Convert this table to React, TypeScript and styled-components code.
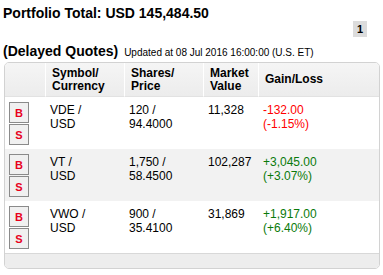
import React from 'react';
import styled, { createGlobalStyle } from 'styled-components';

const GlobalStyle = createGlobalStyle`
  body {
    margin: 0;
    background: #fff;
    font-family: 'Liberation Sans', Arial, sans-serif;
    color: #000;
  }
`;

type Holding = {
  symbol: string;
  currency: string;
  shares: string;
  price: string;
  value: string;
  gain: string;
  pct: string;
};

const holdings: Holding[] = [
  { symbol: 'VDE', currency: 'USD', shares: '120', price: '94.4000', value: '11,328', gain: '-132.00', pct: '(-1.15%)' },
  { symbol: 'VT', currency: 'USD', shares: '1,750', price: '58.4500', value: '102,287', gain: '+3,045.00', pct: '(+3.07%)' },
  { symbol: 'VWO', currency: 'USD', shares: '900', price: '35.4100', value: '31,869', gain: '+1,917.00', pct: '(+6.40%)' },
];

function App() {
  return (
    <Page>
      <GlobalStyle />
      <Title>Portfolio Total: USD 145,484.50</Title>
      <Pager>
        <PageBadge>1</PageBadge>
      </Pager>
      <QuotesLine>
        <Heading>(Delayed Quotes)</Heading>
        <Updated>Updated at 08 Jul 2016 16:00:00 (U.S. ET)</Updated>
      </QuotesLine>
      <Table>
        <HeadRow>
          <HeadCell />
          <HeadCell>
            Symbol/
            <br />
            Currency
          </HeadCell>
          <HeadCell>
            Shares/
            <br />
            Price
          </HeadCell>
          <HeadCell>
            Market
            <br />
            Value
          </HeadCell>
          <HeadCell last>Gain/Loss</HeadCell>
        </HeadRow>
        {holdings.map((h, i) => (
          <Row key={h.symbol} striped={i % 2 === 1}>
            <Actions>
              <TradeButton>B</TradeButton>
              <TradeButton>S</TradeButton>
            </Actions>
            <Cell>
              {h.symbol} /
              <br />
              {h.currency}
            </Cell>
            <Cell>
              {h.shares} /
              <br />
              {h.price}
            </Cell>
            <Cell>{h.value}</Cell>
            <Change up={h.gain.startsWith('+')}>
              {h.gain}
              <br />
              {h.pct}
            </Change>
          </Row>
        ))}
        <Footer />
      </Table>
    </Page>
  );
}

export default App;

const Page = styled.div`
  padding: 5px 5px 0 3px;
  width: 383px;
  box-sizing: border-box;
`;

const Title = styled.h2`
  margin: 0;
  font-size: 14px;
  line-height: 17px;
  font-weight: bold;
`;

const Pager = styled.div`
  display: flex;
  justify-content: flex-end;
  padding-right: 11px;
  margin-top: -1px;
`;

const PageBadge = styled.span`
  display: flex;
  align-items: center;
  justify-content: center;
  width: 14px;
  height: 16px;
  background: #dcdcdc;
  font-size: 11px;
  font-weight: bold;
`;

const QuotesLine = styled.div`
  display: flex;
  align-items: baseline;
  gap: 6px;
  margin-top: 6px;
`;

const Heading = styled.h3`
  margin: 0;
  font-size: 14px;
  line-height: 17px;
  font-weight: bold;
`;

const Updated = styled.span`
  font-size: 10px;
`;

const Table = styled.div`
  margin: 2px 0 0 1px;
  width: 374px;
  border: 1px solid #d2d2d2;
  border-radius: 5px;
  overflow: hidden;
  display: grid;
  grid-template-columns: 41px 79px 79px 55px 1fr;
`;

const HeadRow = styled.div`
  display: contents;
`;

const HeadCell = styled.div<{ last?: boolean }>`
  height: 33px;
  display: flex;
  align-items: center;
  padding: 0 6px;
  font-size: 12px;
  font-weight: bold;
  line-height: 13px;
  background: linear-gradient(#f5f5f5, #ececec);
  border-right: ${(p) => (p.last ? 'none' : '1px solid #fff')};
  border-bottom: 1px solid #e2e2e2;
`;

const Row = styled.div<{ striped: boolean }>`
  display: contents;
  & > div {
    background: ${(p) => (p.striped ? '#f2f2f2' : '#fff')};
  }
`;

const Actions = styled.div`
  display: flex;
  flex-direction: column;
  gap: 1px;
  padding: 5px 0 4px 4px;
`;

const TradeButton = styled.button`
  width: 20px;
  height: 21px;
  padding: 0;
  border: 1px solid #8a8a8a;
  background: #f0f0f0;
  color: #e8001c;
  font-family: 'Liberation Sans', Arial, sans-serif;
  font-size: 11px;
  font-weight: bold;
`;

const Cell = styled.div`
  padding: 6px 4px 0;
  font-size: 12px;
  line-height: 14px;
`;

const Change = styled(Cell)<{ up: boolean }>`
  color: ${(p) => (p.up ? '#0a7a0a' : '#f00')};
`;

const Footer = styled.div`
  grid-column: 1 / -1;
  height: 14px;
  background: #ededed;
  border-top: 1px solid #d8d8d8;
`;
